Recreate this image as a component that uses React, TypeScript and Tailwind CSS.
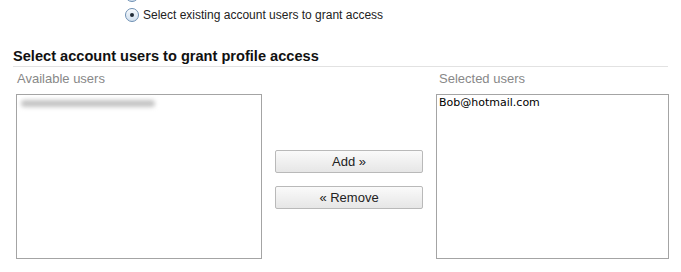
function Radio({ checked }: { checked?: boolean }) {
  return (
    <span className="flex h-[14px] w-[14px] shrink-0 items-center justify-center rounded-full border border-[#6d8fb3] bg-gradient-to-b from-[#f4f8fc] to-[#d3e1ef] shadow-[inset_0_1px_1px_rgba(255,255,255,0.9)]">
      {checked && <span className="h-[4px] w-[4px] rounded-full bg-[#1f2a36]" />}
    </span>
  )
}

function GrayButton({ label }: { label: string }) {
  return (
    <button className="h-[23px] w-[148px] rounded-[2px] border border-[#b9b9b9] bg-gradient-to-b from-[#fafafa] to-[#e6e6e6] text-[13px] leading-[21px] text-[#222]">
      {label}
    </button>
  )
}

export default function App() {
  return (
    <div className="h-[272px] w-[681px] overflow-hidden bg-white font-['Liberation_Sans',Arial,sans-serif] text-[#222]">
      {/* access options (first one scrolled off the top) */}
      <div className="-mt-[12px] flex flex-col gap-[6px] pl-[125px]">
        <div className="flex h-[14px] items-center gap-[4px]">
          <Radio />
        </div>
        <div className="flex h-[14px] items-center gap-[4px]">
          <Radio checked />
          <span className="text-[12px] leading-[14px]">Select existing account users to grant access</span>
        </div>
      </div>

      <h2 className="mx-[13px] mt-[25px] border-b border-[#e2e2e2] pb-[1px] text-[14.6px] font-bold leading-[18px] text-[#111]">
        Select account users to grant profile access
      </h2>

      <div className="mt-[4px] flex">
        <div className="ml-[16px] flex w-[246px] flex-col">
          <span className="pl-[1px] text-[13px] leading-[16px] text-[#888]">Available users</span>
          <div className="mt-[7px] h-[165px] border border-[#a4a4a4] bg-white px-[3px] py-[4px]">
            <div className="ml-[1px] mt-[1px] h-[7px] w-[134px] rounded-full bg-[#c4c4c4] blur-[2px]" />
          </div>
        </div>

        <div className="flex w-[174px] flex-col gap-[13px] pl-[13px] pt-[79px]">
          <GrayButton label="Add »" />
          <GrayButton label="« Remove" />
        </div>

        <div className="flex w-[233px] flex-col">
          <span className="pl-[3px] text-[13px] leading-[16px] text-[#888]">Selected users</span>
          <div className="mt-[7px] h-[165px] border border-[#a4a4a4] bg-white px-[2px] py-[1px]">
            <div className="font-['DejaVu_Sans',sans-serif] text-[11px] leading-[14px] text-black">Bob@hotmail.com</div>
          </div>
        </div>
      </div>
    </div>
  )
}
